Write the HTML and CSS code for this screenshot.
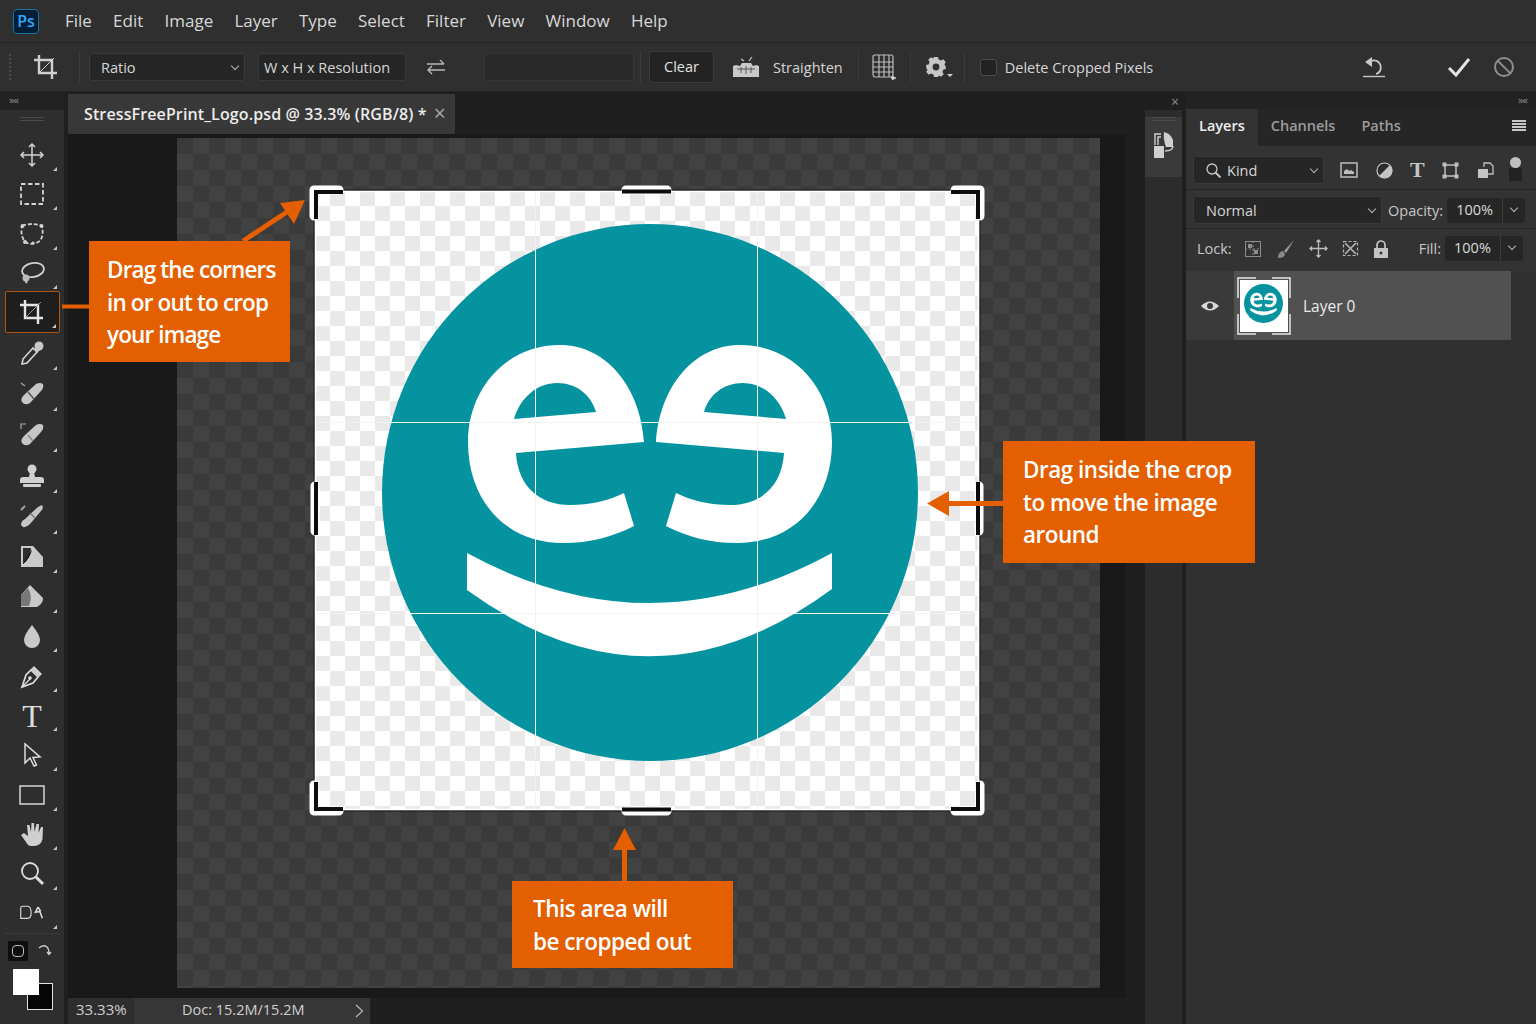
FILE: index.html

```html
<!DOCTYPE html>
<html lang="en">
<head>
  <meta charset="UTF-8">
  <meta name="viewport" content="width=device-width, initial-scale=1.0">
  <title>Photoshop crop tool</title>
  <link rel="stylesheet" href="styles.css">
</head>
<body>

<!-- shared logo, used on the canvas and in the layer thumbnail -->
<svg class="defs" width="0" height="0">
  <symbol id="ee-logo" viewBox="382 224 536 537">
    <ellipse cx="650" cy="492.5" rx="268" ry="268.5" fill="#05939f"/>
    <g id="ee-letter" fill="#fff" fill-rule="evenodd">
      <path d="M644 442C640 385 605 345 560 345C505 345 468 390 468 442C468 500 505 543 563 543C590 543 612 537 634 526L624 493C608 501 590 505 570 505C540 505 518 487 516 453ZM514 419C520 398 537 383 557 383C577 383 591 395 596 412Z"/>
    </g>
    <use href="#ee-letter" transform="translate(1300 0) scale(-1 1)"/>
    <path d="M467 553Q650 653 832 553L832 589Q650 723 467 590Z" fill="#fff"/>
  </symbol>
</svg>

<div class="menubar">
  <div class="ps-logo">Ps</div>
  <div class="menu-items">
    <span>File</span><span>Edit</span><span>Image</span><span>Layer</span><span>Type</span>
    <span>Select</span><span>Filter</span><span>View</span><span>Window</span><span>Help</span>
  </div>
</div>

<div class="optionsbar">
  <div class="grip"></div>
  <svg class="opt-crop" width="26" height="26" viewBox="0 0 26 26" fill="none" stroke="#cfcfcf" stroke-width="2.4">
    <path d="M6 1V19H24M1 6H19V25"/><path d="M7 18L21 4" stroke-width="1"/>
  </svg>
  <div class="opt-sep sep-a"></div>
  <div class="select ratio">Ratio<i class="chev"></i></div>
  <div class="select wh">W x H x Resolution</div>
  <svg class="swap" width="20" height="16" viewBox="0 0 20 16" fill="none" stroke="#b8b8b8" stroke-width="1.4">
    <path d="M1 5H18M14 1L18 5M19 11H2M6 7L2 11L6 15"/>
  </svg>
  <div class="blank-input"></div>
  <div class="opt-sep sep-b"></div>
  <div class="btn-clear">Clear</div>
  <svg class="straighten" width="28" height="22" viewBox="0 0 28 22">
    <path d="M1 10L4 9L8 10L10 7H19L21 10L24 9L27 10V21H1Z" fill="#c9c9c9"/>
    <path d="M5 13H23M9 11V17M14 10V18M19 11V17" stroke="#555" stroke-width="1"/>
    <path d="M9 3L12 5M20 1L17 5" stroke="#c9c9c9" stroke-width="1.2"/>
  </svg>
  <span class="opt-label">Straighten</span>
  <div class="opt-sep sep-c"></div>
  <svg class="grid-icon" width="26" height="26" viewBox="0 0 26 26" fill="none" stroke="#bdbdbd" stroke-width="1.2">
    <path d="M2 3Q2 1 4 1H20Q22 1 22 3V20Q22 23 20 23H4Q2 23 2 20ZM2 8H22M2 13H22M2 18H22M8 1V23M13 1V23M18 1V23"/>
    <path d="M22 22V26M20 24H25" stroke="#ddd" stroke-width="1.6"/>
  </svg>
  <div class="opt-sep sep-d"></div>
  <svg class="gear" width="20" height="20" viewBox="0 0 20 20">
    <path d="M8 0H12L12.6 2.6L15 3.6L17.2 2.2L19.8 5L18.400 7.200L19.400 9L20 12L17.400 12.600L16.400 15L17.800 17.200L15 19.800L12.800 18.400L12 20H8L7.400 17.400L5 16.400L2.800 17.800L0.200 15L1.600 12.800L0.600 12L0 8L2.600 7.400L3.600 5L2.200 2.800L5 0.200L7.200 1.600Z" fill="#c6c6c6"/>
    <circle cx="10" cy="10" r="3.4" fill="#303030"/>
  </svg>
  <i class="gear-caret"></i>
  <div class="opt-sep sep-e"></div>
  <div class="checkbox"></div>
  <span class="opt-label delete-label">Delete Cropped Pixels</span>
  <div class="opt-right">
    <svg class="undo" width="24" height="24" viewBox="0 0 24 24" fill="none" stroke="#c8c8c8" stroke-width="1.800">
      <path d="M3 7L10 2V12Z" fill="#c8c8c8" stroke="none"/>
      <path d="M8 6.500Q13 4 17 7.500Q20 11 18 16Q17 18 14 19"/>
      <path d="M1 21.500H23" stroke-width="1.400"/>
    </svg>
    <svg width="24" height="22" viewBox="0 0 24 22" fill="none" stroke="#e4e4e4" stroke-width="3">
      <path d="M2 12L9 19L22 3"/>
    </svg>
    <svg width="22" height="22" viewBox="0 0 22 22" fill="none" stroke="#8f8f8f" stroke-width="2">
      <circle cx="11" cy="11" r="9"/><path d="M4.600 4.600L17.400 17.400"/>
    </svg>
  </div>
</div>

<div class="workspace">

  <aside class="toolbar">
    <div class="tool-head"><span class="collapse">&#187;&#171;</span></div>
    <div class="tool-body">
      <div class="grip-h"></div>
      <div class="tool"><svg viewBox="0 0 26 26" fill="none" stroke="#d2d2d2" stroke-width="1.500"><path d="M13 2V24M2 13H24M10 5L13 2L16 5M10 21L13 24L16 21M5 10L2 13L5 16M21 10L24 13L21 16"/></svg></div>
      <div class="tool"><svg viewBox="0 0 26 26" fill="none" stroke="#d2d2d2" stroke-width="1.800" stroke-dasharray="4.500 2.500"><rect x="2" y="3" width="22" height="20"/></svg></div>
      <div class="tool"><svg viewBox="0 0 26 26" fill="none" stroke="#d2d2d2" stroke-width="1.800" stroke-dasharray="4 2"><path d="M3 5Q13 1 23 5Q25 14 21 20Q13 25 6 21Q1 14 3 5Z"/><g fill="#d2d2d2" stroke="none"><circle cx="3.500" cy="5" r="2"/><circle cx="22.500" cy="5" r="2"/><circle cx="6" cy="21" r="2"/><circle cx="14" cy="22" r="1.600"/></g></svg></div>
      <div class="tool"><svg viewBox="0 0 26 26" fill="none" stroke="#d2d2d2" stroke-width="1.800"><ellipse cx="14" cy="10" rx="11" ry="7" transform="rotate(-10 14 10)"/><path d="M6 15Q5 20 8 23" /><circle cx="7" cy="18" r="3.500" fill="#bdbdbd" stroke="none"/></svg></div>
      <div class="tool active"><svg viewBox="0 0 26 26" fill="none" stroke="#e6e6e6" stroke-width="2.400"><path d="M6 1V19H24M1 6H19V25"/><path d="M7 18L22 3" stroke-width="1" stroke="#9a9a9a"/></svg></div>
      <div class="tool"><svg viewBox="0 0 26 26"><path d="M16 9L19 12" stroke="#c8c8c8" stroke-width="6"/><circle cx="20" cy="6" r="4.500" fill="#c8c8c8"/><path d="M14 8L4 19L3 24L8 23L18 12Z" fill="#2d2d2d" stroke="#d8d8d8" stroke-width="1.600"/></svg></div>
      <div class="tool"><svg viewBox="0 0 26 26"><path d="M3 21Q1 18 5 14L17 3Q21 1 24 3Q25 7 22 10L11 22Q6 25 3 21Z" fill="#c6c6c6"/><path d="M9 11L15 18" stroke="#555" stroke-width="1.500"/><path d="M2 2L6 5" stroke="#aaa" stroke-width="1.200"/></svg></div>
      <div class="tool"><svg viewBox="0 0 26 26"><path d="M3 21Q1 18 5 14L17 3Q21 1 24 3Q25 7 22 10L11 22Q6 25 3 21Z" fill="#c6c6c6"/><path d="M9 13L14 19" stroke="#888" stroke-width="1.500"/><path d="M2 7V2H7" stroke="#aaa" stroke-width="1.200" fill="none"/></svg></div>
      <div class="tool"><svg viewBox="0 0 26 26"><circle cx="13" cy="6" r="4.500" fill="#d0d0d0"/><path d="M11 9H15L16 14H22Q25 14 25 17V20H1V17Q1 14 4 14H10Z" fill="#d0d0d0"/><rect x="4" y="21" width="18" height="3" rx="1" fill="#d0d0d0"/></svg></div>
      <div class="tool"><svg viewBox="0 0 26 26"><path d="M2 21Q2 17 6 15L19 3L23 1Q25 4 22 7L11 20Q7 24 4 23Z" fill="#c6c6c6"/><path d="M11 9L16 14" stroke="#777" stroke-width="1.400"/><path d="M2 6L6 2" stroke="#aaa" stroke-width="1.800"/></svg></div>
      <div class="tool"><svg viewBox="0 0 26 26"><path d="M2 2H14L24 13V23H2Z" fill="#c9c9c9"/><path d="M4 4H12Q12 14 4 21Z" fill="#2d2d2d"/><path d="M4 21Q12 14 14 4" stroke="#ddd" stroke-width="1"/></svg></div>
      <div class="tool"><svg viewBox="0 0 26 26"><path d="M2 23V11L11 1L24 14Q24 20 18 23Z" fill="#c9c9c9"/><path d="M2 22V11L9 4Q14 12 10 22Z" fill="#777"/></svg></div>
      <div class="tool"><svg viewBox="0 0 26 26"><path d="M13 2Q21 12 21 17A8 8 0 0 1 5 17Q5 12 13 2Z" fill="#c9c9c9"/></svg></div>
      <div class="tool"><svg viewBox="0 0 26 26"><path d="M15 3L23 11L20 14L12 6Z" fill="#cfcfcf"/><path d="M12 7L19 14L14 20L3 24L7 12Z" fill="#2d2d2d" stroke="#dcdcdc" stroke-width="1.700"/><path d="M3 24L11 16" stroke="#dcdcdc" stroke-width="1.200"/><circle cx="11" cy="15" r="1.800" fill="#dcdcdc"/></svg></div>
      <div class="tool"><span class="type-glyph">T</span></div>
      <div class="tool"><svg viewBox="0 0 26 26" fill="none" stroke="#dcdcdc" stroke-width="1.500"><path d="M6 2V21L11 16L15 24L17.500 23L14 15.500L21 15Z"/></svg></div>
      <div class="tool"><svg viewBox="0 0 26 26" fill="none" stroke="#d6d6d6" stroke-width="1.500"><rect x="1" y="4" width="24" height="18"/></svg></div>
      <div class="tool"><svg viewBox="0 0 26 26"><path d="M2 14L5 12L9 15L8 4H10.500L12 11L12.500 2H15L15.500 11L17.500 3H20L19.500 12L22 6H24L23.500 18Q22 25 15 25H12Q9 25 7 21Z" fill="#cfcfcf"/></svg></div>
      <div class="tool"><svg viewBox="0 0 26 26" fill="none" stroke="#dcdcdc" stroke-width="1.800"><circle cx="11" cy="10" r="8"/><path d="M17 16L24 23" stroke-width="3"/></svg></div>
      <div class="tool no-flag"><svg viewBox="0 0 30 26" fill="none" stroke="#dcdcdc" stroke-width="1.300"><path d="M2 6Q2 4 4 4H10Q14 4 14 12Q14 18 9 18H2Z"/><path d="M22 5L19 11L24 10L27 18M22 5L25 10" stroke-width="1.800"/></svg></div>
      <div class="tool-sep"></div>
      <div class="mode-row">
        <div class="quick-mask"><i></i></div>
        <svg width="16" height="16" viewBox="0 0 16 16" fill="none" stroke="#cfcfcf" stroke-width="1.300"><path d="M2 5Q6 1 10 4Q12 6 12 11M10 9L12 11.500L14 9"/></svg>
      </div>
      <div class="swatches">
        <div class="swatch-bg"></div>
        <div class="swatch-fg"></div>
      </div>
    </div>
  </aside>

  <main class="doc-column">
    <div class="tabbar">
      <div class="doc-tab">StressFreePrint_Logo.psd @ 33.3% (RGB/8) *<span class="tab-close">&#215;</span></div>
    </div>
    <div class="pasteboard">
      <div class="canvas">
        <div class="crop-area">
          <svg class="logo-art"><use href="#ee-logo"/></svg>
        </div>
      </div>
    </div>
    <div class="statusbar">
      <div class="zoom-cell">33.33%</div>
      <div class="doc-cell">Doc: 15.2M/15.2M
        <svg class="status-next" width="9" height="14" viewBox="0 0 9 14" fill="none" stroke="#b5b5b5" stroke-width="1.200"><path d="M1 1L7.500 7L1 13"/></svg>
      </div>
    </div>
  </main>

  <aside class="dock">
    <div class="dock-head"><span class="close-mark">&#215;</span></div>
    <div class="dock-btn">
      <div class="grip-h short"></div>
      <svg width="22" height="28" viewBox="0 0 22 28">
        <path d="M2 14V3H8M5 14V6H8" fill="none" stroke="#d0d0d0" stroke-width="1.400"/>
        <path d="M11 1Q18 3 20 9V16H13Q10 8 11 1Z" fill="#d0d0d0"/>
        <path d="M20 15Q20 20 12 20" fill="none" stroke="#d0d0d0" stroke-width="1.400"/>
        <rect x="1" y="15" width="10" height="12" fill="#d0d0d0"/>
      </svg>
    </div>
  </aside>

  <section class="panels">
    <div class="panels-head"><span class="collapse">&#187;&#171;</span></div>
    <div class="panel-tabs">
      <div class="panel-tab on">Layers</div>
      <div class="panel-tab">Channels</div>
      <div class="panel-tab">Paths</div>
      <div class="panel-menu"><i></i><i></i><i></i><i></i></div>
    </div>

    <div class="panel-row filter-row">
      <div class="select kind">
        <svg width="17" height="17" viewBox="0 0 17 17" fill="none" stroke="#c8c8c8" stroke-width="1.300"><circle cx="7" cy="7" r="5"/><path d="M10.500 10.500L15.500 15.500" stroke-width="1.800"/></svg>
        Kind<i class="chev"></i>
      </div>
      <div class="filter-icons">
        <svg width="18" height="16" viewBox="0 0 18 16"><rect x="1" y="1" width="16" height="14" fill="none" stroke="#bdbdbd" stroke-width="1.500"/><path d="M4 12V9L7 7L9 9L11 8L14 10V12Z" fill="#bdbdbd"/></svg>
        <svg width="17" height="17" viewBox="0 0 17 17"><circle cx="8.500" cy="8.500" r="7.500" fill="#2c2c2c" stroke="#c4c4c4" stroke-width="1.200"/><path d="M14 3A7.500 7.500 0 0 1 3 14Z" fill="#c4c4c4"/></svg>
        <span class="type-glyph small">T</span>
        <svg width="17" height="17" viewBox="0 0 17 17" fill="#c0c0c0"><path d="M3 3H14V14H3Z" fill="none" stroke="#c0c0c0" stroke-width="1.500"/><rect x="0.500" y="0.500" width="4" height="4"/><rect x="12.500" y="0.500" width="4" height="4"/><rect x="0.500" y="12.500" width="4" height="4"/><rect x="12.500" y="12.500" width="4" height="4"/></svg>
        <svg width="17" height="17" viewBox="0 0 17 17"><path d="M7 5V1H13L16 4V12H11" fill="none" stroke="#c0c0c0" stroke-width="1.300"/><rect x="1" y="7" width="10" height="9" fill="#c4c4c4"/></svg>
      </div>
      <div class="filter-toggle"><b></b><i></i></div>
    </div>

    <div class="panel-row blend-row">
      <div class="select normal">Normal<i class="chev"></i></div>
      <span class="row-label">Opacity:</span>
      <div class="num-field"><span>100%</span><u><i class="chev"></i></u></div>
    </div>

    <div class="panel-row lock-row">
      <span class="row-label lock-label">Lock:</span>
      <div class="lock-icons">
        <svg width="16" height="16" viewBox="0 0 16 16"><rect x="0.500" y="0.500" width="15" height="15" fill="none" stroke="#8d8d8d"/><path d="M3 3H7V7H3ZM9 9H13V13H9Z" fill="#8d8d8d"/><path d="M8 0V16M0 8H16" stroke="#8d8d8d" stroke-dasharray="2 2"/></svg>
        <svg width="20" height="20" viewBox="0 0 20 20"><path d="M19 1L9 12L11 14Z" fill="#9b9b9b"/><path d="M8 12Q3 13 3 19Q10 19 10 15Z" fill="#8a8a8a"/></svg>
        <svg width="19" height="19" viewBox="0 0 19 19" fill="none" stroke="#bdbdbd" stroke-width="1.300"><path d="M9.500 1V18M1 9.500H18M7.500 3L9.500 1L11.500 3M7.500 16L9.500 18L11.500 16M3 7.500L1 9.500L3 11.500M16 7.500L18 9.500L16 11.500"/></svg>
        <svg width="17" height="17" viewBox="0 0 17 17" fill="none" stroke="#b5b5b5" stroke-width="1.200"><rect x="1.500" y="1.500" width="14" height="14" stroke-dasharray="3 2"/><path d="M3 3L14 14M14 3L3 14" stroke-width="1.600"/></svg>
        <svg width="16" height="18" viewBox="0 0 16 18"><path d="M4 8V5A4 4 0 0 1 12 5V8" fill="none" stroke="#c4c4c4" stroke-width="1.700"/><path d="M1 8H15V18H1Z" fill="#c4c4c4"/><circle cx="8" cy="13" r="1.500" fill="#333"/></svg>
      </div>
      <span class="row-label fill-label">Fill:</span>
      <div class="num-field"><span>100%</span><u><i class="chev"></i></u></div>
    </div>

    <div class="layers-list">
      <div class="layer-row">
        <div class="eye-cell">
          <svg width="20" height="12" viewBox="0 0 20 12"><path d="M1 6Q10 -3 19 6Q10 15 1 6Z" fill="#d8d8d8"/><circle cx="10" cy="6" r="3" fill="#3a3a3a"/></svg>
        </div>
        <div class="layer-body">
          <div class="thumb">
            <svg class="thumb-logo"><use href="#ee-logo"/></svg>
            <svg class="thumb-frame" viewBox="0 0 54 58" fill="none" stroke="#e6e6e6" stroke-width="1.500">
              <path d="M1 21V1H19M35 1H53V21M1 37V57H19M35 57H53V37"/>
            </svg>
          </div>
          <span class="layer-name">Layer 0</span>
        </div>
      </div>
    </div>
  </section>

  <!-- crop frame and arrows, drawn in page coordinates over everything -->
  <svg class="overlay" viewBox="0 92 1536 932">
    <g stroke="#f3f3f3" stroke-width="1">
      <path d="M535.500 191V810M757.500 191V810M315 422.500H979M315 613.500H979"/>
    </g>
    <rect x="314" y="190" width="666" height="621" fill="none" stroke="#1a1a1a" stroke-width="1"/>
    <rect x="315.500" y="191.500" width="663" height="618" fill="none" stroke="#fff" stroke-width="1.500"/>

    <g fill="none" stroke-linecap="round" stroke-linejoin="round">
      <g stroke="#fff" stroke-width="9">
        <path d="M314 216V190H339"/>
        <path d="M980 216V190H955"/>
        <path d="M314 785V811H339"/>
        <path d="M980 785V811H955"/>
        <path d="M626 190H667M626 811H667M315 486V531M979 486V531"/>
      </g>
      <g stroke="#0c0c0c" stroke-width="4" stroke-linecap="butt" stroke-linejoin="miter">
        <path d="M316 219V192H343"/>
        <path d="M978 219V192H951"/>
        <path d="M316 782V809H343"/>
        <path d="M978 782V809H951"/>
        <path d="M622 191.500H671M622 809.500H671M316 482V535M978 482V535"/>
      </g>
    </g>

    <g fill="#e35f00" stroke="#e35f00">
      <path d="M62 306.500H89" stroke-width="4"/>
      <path d="M243 241L290 210" stroke-width="5"/>
      <path d="M305 200L280 203L294 224Z" stroke="none"/>
      <path d="M945 503.500H1003" stroke-width="5"/>
      <path d="M927 503.500L949 491V516Z" stroke="none"/>
      <path d="M624.500 846V881" stroke-width="5"/>
      <path d="M624.500 828L613 850H636Z" stroke="none"/>
    </g>
  </svg>

  <div class="callout call-corners">Drag the corners<br>in or out to crop<br>your image</div>
  <div class="callout call-inside">Drag inside the crop<br>to move the image<br>around</div>
  <div class="callout call-out">This area will<br>be cropped out</div>
</div>

</body>
</html>
```

FILE: styles.css

```css
* {
  box-sizing: border-box;
}

html, body {
  margin: 0;
  padding: 0;
}

body {
  width: 1536px;
  height: 1024px;
  overflow: hidden;
  background: #1f1f1f;
  color: #d6d6d6;
  font-family: "Open Sans", "Noto Sans", sans-serif;
  font-size: 14px;
}

.defs {
  position: absolute;
}

/* menu */
.menubar {
  height: 43px;
  background: #2f2f2f;
  display: flex;
  align-items: center;
  border-bottom: 1px solid #232323;
}

.ps-logo {
  width: 26px;
  height: 25px;
  margin-left: 13px;
  border: 1.500px solid #1f6f9f;
  border-radius: 4px;
  background: #001e36;
  color: #31a8ff;
  font-size: 16px;
  font-weight: 600;
  line-height: 22px;
  text-align: center;
}

.menu-items {
  display: flex;
  gap: 21.200px;
  margin-left: 26px;
  font-size: 17px;
  color: #d8d8d8;
  margin-top: -2px;
}

/* options bar */
.optionsbar {
  height: 49px;
  background: #2f2f2f;
  display: flex;
  align-items: center;
  border-bottom: 1px solid #232323;
  position: relative;
}

.grip {
  width: 3px;
  height: 26px;
  margin-left: 9px;
  border-left: 2px dotted #4a4a4a;
}

.opt-crop {
  margin-left: 21px;
}

.opt-sep {
  width: 1px;
  height: 32px;
  background: #3a3a3a;
}

.sep-a { margin-left: 20px; }
.sep-b { margin-left: 6px; }
.sep-c { margin-left: 15px; }
.sep-d { margin-left: 13px; }
.sep-e { margin-left: 11px; }

.select {
  height: 28px;
  background: #262626;
  border: 1px solid #3a3a3a;
  border-radius: 3px;
  display: flex;
  align-items: center;
  position: relative;
  color: #d6d6d6;
  font-size: 14.500px;
}

.chev {
  display: block;
  width: 6px;
  height: 6px;
  border-right: 1.200px solid #b5b5b5;
  border-bottom: 1.200px solid #b5b5b5;
  transform: rotate(45deg);
}

.select .chev {
  position: absolute;
  right: 6px;
  top: 9px;
}

.ratio {
  width: 156px;
  margin-left: 9px;
  padding-left: 11px;
}

.wh {
  width: 148px;
  margin-left: 13px;
  padding-left: 5px;
  white-space: nowrap;
}

.swap {
  margin-left: 20px;
}

.blank-input {
  width: 150px;
  height: 28px;
  margin-left: 38px;
  background: #292929;
  border: 1px solid #363636;
  border-radius: 3px;
}

.btn-clear {
  width: 65px;
  height: 32px;
  margin-left: 8px;
  background: #232323;
  border: 1px solid #3a3a3a;
  border-radius: 3px;
  text-align: center;
  line-height: 30px;
  font-size: 14.500px;
  color: #e2e2e2;
}

.straighten {
  margin-left: 18px;
}

.opt-label {
  margin-left: 13px;
  font-size: 14.500px;
  color: #d6d6d6;
  white-space: nowrap;
}

.grid-icon {
  margin-left: 12px;
}

.gear {
  margin-left: 15px;
}

.gear-caret {
  width: 0;
  height: 0;
  margin: 17px 0 0 1px;
  border-left: 3px solid transparent;
  border-right: 3px solid transparent;
  border-top: 3px solid #cfcfcf;
}

.checkbox {
  width: 17px;
  height: 17px;
  margin-left: 15px;
  background: #222;
  border: 1px solid #4b4b4b;
  border-radius: 3px;
}

.delete-label {
  margin-left: 8px;
}

.opt-right {
  margin-left: auto;
  display: flex;
  align-items: center;
  gap: 22px;
  padding-right: 21px;
}

.undo {
  margin-right: 39px;
}

/* main row */
.workspace {
  height: 932px;
  display: flex;
  position: relative;
}

.toolbar {
  width: 64px;
  flex-shrink: 0;
}

.tool-head {
  height: 18px;
  background: #222;
  color: #8a8a8a;
  padding-left: 9px;
}

.collapse {
  display: block;
  font-size: 11px;
  line-height: 16px;
  letter-spacing: -1px;
}

.tool-body {
  height: 914px;
  background: #2e2e2e;
  display: flex;
  flex-direction: column;
  align-items: center;
}

.grip-h {
  width: 24px;
  height: 4px;
  margin: 7px 0 14px;
  border-top: 1px solid #4c4c4c;
  border-bottom: 1px solid #4c4c4c;
}

.grip-h.short {
  margin: 7px auto 10px;
}

.tool {
  width: 55px;
  height: 39.600px;
  flex-shrink: 0;
  display: flex;
  align-items: center;
  justify-content: center;
  position: relative;
}

/* the reference spaces its tool groups a little differently */
.tool:nth-child(-n+6) {
  height: 39.500px;
}

.tool:nth-child(n+7):nth-child(-n+11) {
  height: 41px;
}

.tool svg {
  width: 26px;
  height: 26px;
}

.tool::after {
  content: "";
  position: absolute;
  right: 3px;
  bottom: 4px;
  border-left: 4px solid transparent;
  border-bottom: 4px solid #c8c8c8;
}

.tool.active {
  height: 42px;
  margin-top: -2.500px;
  background: #1e1e1e;
  border: 1px solid #b0540f;
  border-radius: 2px;
}

.type-glyph {
  font-family: "Liberation Serif", serif;
  font-size: 32px;
  line-height: 1;
  color: #dcdcdc;
}

.type-glyph.small {
  font-size: 22px;
  font-weight: bold;
  color: #c4c4c4;
}

.tool-sep {
  width: 56px;
  height: 1px;
  background: #3a3a3a;
}

.mode-row {
  width: 64px;
  padding-left: 8px;
  margin-top: 6.500px;
  display: flex;
  align-items: center;
  gap: 9px;
}

.quick-mask {
  width: 20px;
  height: 20px;
  background: #0e0e0e;
  border-radius: 2px;
  padding: 4px;
}

.quick-mask i {
  display: block;
  width: 12px;
  height: 12px;
  border: 1px solid #bdbdbd;
  border-radius: 4px;
}

.swatches {
  width: 64px;
  height: 42px;
  margin-top: 8px;
  position: relative;
}

.swatch-fg {
  position: absolute;
  left: 13px;
  top: 0;
  width: 26px;
  height: 26px;
  background: #fff;
}

.swatch-bg {
  position: absolute;
  left: 27px;
  top: 14px;
  width: 26px;
  height: 27px;
  background: #050505;
  border: 1px solid #e2e2e2;
}

/* document */
.doc-column {
  width: 1058px;
  margin-left: 4px;
  flex-shrink: 0;
  padding-top: 2px;
  background: #1f1f1f;
}

.tabbar {
  height: 40px;
}

.doc-tab {
  width: 387px;
  height: 40px;
  padding-left: 16px;
  background: #383838;
  color: #ececec;
  font-size: 16px;
  font-weight: 600;
  letter-spacing: 0.120px;
  line-height: 39px;
  white-space: nowrap;
}

.tab-close {
  margin-left: 7px;
  color: #a8a8a8;
  font-size: 21px;
  font-weight: 400;
  vertical-align: -1px;
}

.pasteboard {
  height: 864px;
  background: #191919;
  padding: 4px 0 0 109px;
}

.canvas {
  width: 923px;
  height: 850px;
  position: relative;
  background-color: #3a3a3a;
  background-image: conic-gradient(#424242 25%, transparent 0 50%, #424242 0 75%, transparent 0);
  background-size: 32px 32px;
}

.crop-area {
  position: absolute;
  left: 138px;
  top: 53px;
  width: 664px;
  height: 619px;
  background-color: #fff;
  background-image: conic-gradient(#e9e9e9 25%, transparent 0 50%, #e9e9e9 0 75%, transparent 0);
  background-size: 30px 30px;
}

.logo-art {
  position: absolute;
  left: 67px;
  top: 33px;
  width: 536px;
  height: 537px;
}

.statusbar {
  height: 26px;
  display: flex;
  font-size: 14.500px;
  line-height: 23px;
  color: #cfcfcf;
}

.zoom-cell {
  width: 66px;
  padding-left: 8px;
  background: #2e2e2e;
  font-size: 15px;
}

.doc-cell {
  width: 236px;
  padding-left: 48px;
  background: #363636;
  position: relative;
}

.status-next {
  position: absolute;
  right: 6px;
  top: 6px;
}

/* dock */
.dock {
  width: 37px;
  margin-left: 19px;
  flex-shrink: 0;
  background: linear-gradient(#1f1f1f 18px, #2c2c2c 18px);
}

.dock-head {
  height: 18px;
  text-align: right;
  padding-right: 3px;
  color: #8a8a8a;
}

.close-mark {
  font-size: 14px;
  line-height: 16px;
}

.dock-btn {
  height: 60px;
  background: #3a3a3a;
  text-align: center;
}

/* panels */
.panels {
  width: 350px;
  margin-left: 4px;
  flex-shrink: 0;
  background: #333;
}

.panels-head {
  height: 17px;
  background: #222;
  color: #8a8a8a;
  text-align: right;
  padding-right: 9px;
}

.panel-tabs {
  height: 37px;
  background: #262626;
  display: flex;
  align-items: center;
  font-size: 14.500px;
  font-weight: 600;
  color: #9d9d9d;
  position: relative;
}

.panel-tab {
  height: 37px;
  line-height: 33px;
  padding: 0 13px;
}

.panel-tab.on {
  background: #333;
  color: #eee;
}

.panel-menu {
  position: absolute;
  right: 10px;
  top: 11px;
  width: 14px;
}

.panel-menu i {
  display: block;
  height: 1.500px;
  margin-bottom: 1.500px;
  background: #c8c8c8;
}

.panel-row {
  display: flex;
  align-items: center;
  padding-left: 7px;
  border-bottom: 1px solid #262626;
}

.filter-row {
  height: 44px;
  padding-top: 5px;
}

.kind {
  width: 131px;
  padding-left: 11px;
  gap: 5px;
}

.filter-icons {
  display: flex;
  align-items: center;
  gap: 17.500px;
  margin-left: 16px;
}

.filter-toggle {
  width: 14px;
  margin-left: 15px;
  margin-top: -3px;
}

.filter-toggle b {
  display: block;
  width: 11px;
  height: 11px;
  margin: 0 auto;
  border-radius: 50%;
  background: #c0c0c0;
}

.filter-toggle i {
  display: block;
  width: 13px;
  height: 13px;
  background: #222;
}

.blend-row {
  height: 39px;
  padding-top: 2px;
}

.normal {
  width: 189px;
  padding-left: 12px;
}

.row-label {
  font-size: 14.500px;
  color: #c8c8c8;
}

.blend-row .row-label {
  margin-left: 6px;
}

.num-field {
  width: 78px;
  height: 25px;
  margin-left: 4px;
  display: flex;
  background: #262626;
  border-radius: 3px;
  font-size: 14.500px;
  line-height: 24px;
  color: #dadada;
}

.num-field span {
  width: 55px;
  text-align: center;
}

.num-field u {
  flex: 1;
  border-left: 1px solid #3d3d3d;
  padding: 7px 0 0 8px;
}

.lock-row {
  height: 42px;
  padding-left: 11px;
  padding-bottom: 3px;
  border-bottom: none;
}

.lock-icons {
  display: flex;
  align-items: center;
  gap: 14px;
  margin-left: 13px;
  width: 159px;
}

.fill-label {
  margin-left: 15px;
}

.layers-list {
  height: 753px;
  background: #303030;
}

.layer-row {
  width: 325px;
  height: 69px;
  display: flex;
}

.eye-cell {
  width: 48px;
  background: #3a3a3a;
  display: flex;
  align-items: center;
  justify-content: center;
}

.layer-body {
  flex: 1;
  background: #515151;
  display: flex;
  align-items: center;
}

.thumb {
  width: 48px;
  height: 52px;
  margin-left: 6px;
  background: #fff;
  position: relative;
}

.thumb-logo {
  position: absolute;
  left: 4px;
  top: 4px;
  width: 39px;
  height: 39px;
}

.thumb-frame {
  position: absolute;
  left: -3px;
  top: -3px;
  width: 54px;
  height: 58px;
}

.layer-name {
  margin-left: 15px;
  font-size: 15.500px;
  color: #ececec;
}

/* on top of the page */
.overlay {
  position: absolute;
  left: 0;
  top: 0;
  width: 1536px;
  height: 932px;
  pointer-events: none;
}

.callout {
  position: absolute;
  background: #e35f00;
  color: #fff;
  font-size: 22.500px;
  font-weight: 600;
  line-height: 32.500px;
  letter-spacing: -0.500px;
  white-space: nowrap;
}

.call-corners {
  left: 89px;
  top: 149px;
  width: 201px;
  height: 121px;
  padding: 13px 0 0 18px;
  letter-spacing: -0.850px;
}

.call-inside {
  left: 1003px;
  top: 349px;
  width: 252px;
  height: 122px;
  padding: 13px 0 0 20px;
}

.call-out {
  left: 512px;
  top: 789px;
  width: 221px;
  height: 87px;
  padding: 12px 0 0 21px;
}
```
